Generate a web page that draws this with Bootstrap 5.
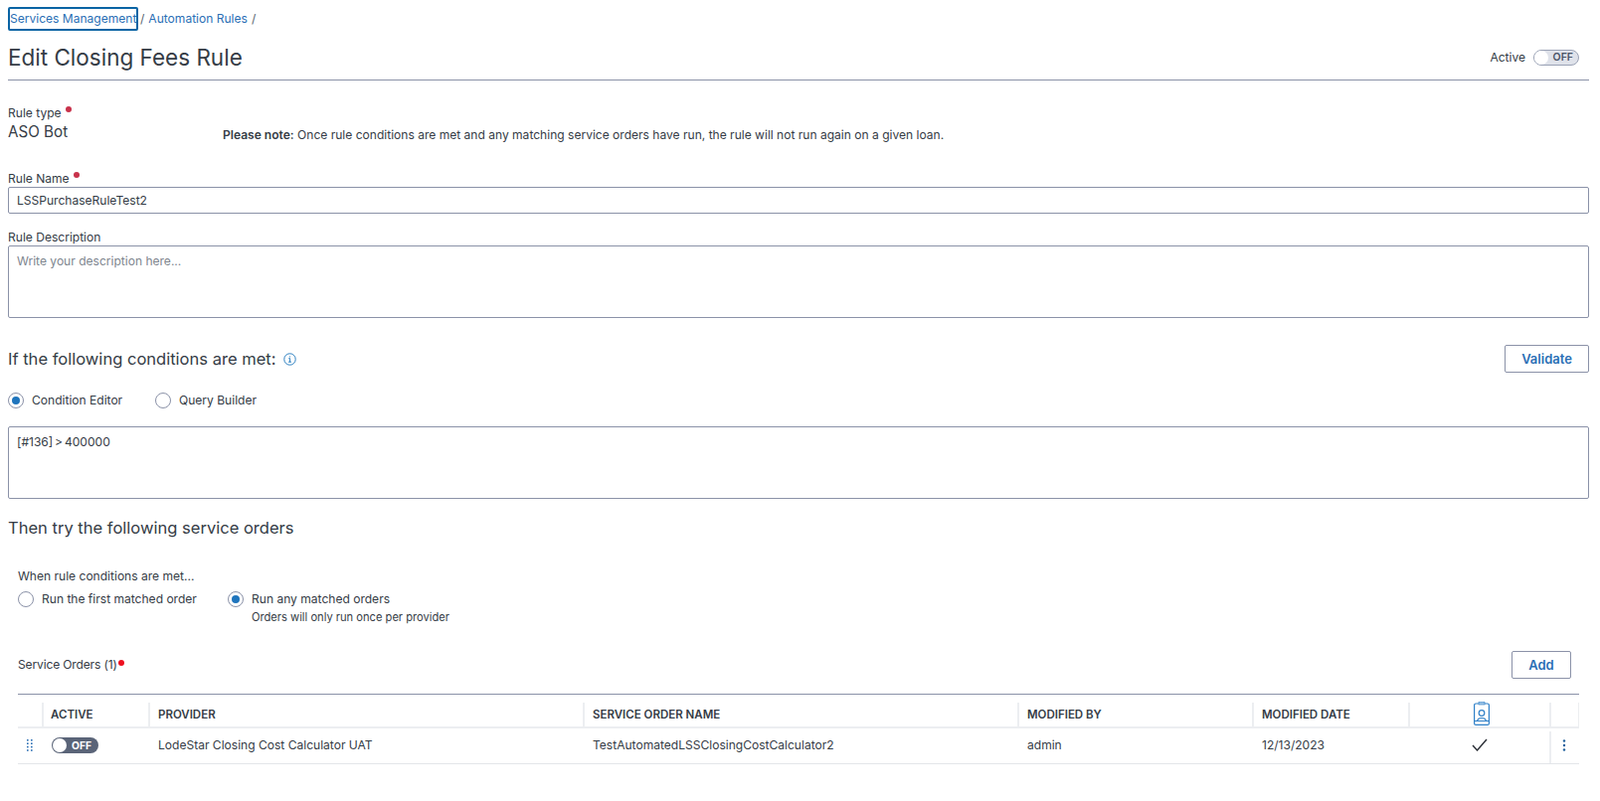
<!DOCTYPE html>
<html lang="en">
<head>
<meta charset="utf-8">
<title>Edit Closing Fees Rule</title>
<link href="https://cdn.jsdelivr.net/npm/bootstrap@5.3.0/dist/css/bootstrap.min.css" rel="stylesheet">
<style>
html,body{height:100%}
body{margin:0;padding:0 11px 0 8px;background:#fff;color:#353c46;font-family:"Inter","Liberation Sans",sans-serif;font-size:12.05px;line-height:20px;overflow:hidden}
a{color:#2b6fb5;text-decoration:none}
.crumbs{display:flex;align-items:center;height:24px;margin-top:7px;gap:4px;color:#555f6d}
.focusbox{border:2px solid #0a64a4;border-radius:2px;height:24px;width:131px;line-height:20px;padding-left:0;margin-right:-2px;white-space:nowrap}
.titlebar{display:flex;justify-content:space-between;align-items:center;height:50px;padding-top:5px;border-bottom:1px solid #8b92a8}
.titlebar h1{font-size:22.5px;font-weight:400;margin:0;line-height:30px;color:#353c46}
.actlabel{margin-right:8px}
.togbox{display:inline-block;position:relative;border-radius:9px}
.togsm{width:46px;height:16px;background:#dfe2ea;border:1px solid #9aa2b5;margin-right:10px}
.togsm::before{content:"";position:absolute;left:0;top:0;width:14px;height:14px;border-radius:50%;background:#fff}
.togsm span{position:absolute;right:5px;top:-2px;font-size:10.5px;font-weight:600;line-height:18px;color:#4a5468}
.toglg{display:block;width:47px;height:16px;background:#5a6478}
.toglg::before{content:"";position:absolute;left:1px;top:1px;width:14px;height:14px;border-radius:50%;background:#fff}
.toglg span{position:absolute;right:7px;top:-1px;font-size:10.3px;font-weight:700;line-height:18px;color:#fff}
.typerow{display:flex;margin-top:25px;height:66px}
.typecol{width:216px}
.typeval{font-size:15.2px;line-height:20px;margin-top:1px}
.fieldlabel{display:block;line-height:16px;margin:0}
.req{display:inline-block;width:6px;height:6px;border-radius:50%;background:#c8324b;margin-left:4px;vertical-align:5px}
.notice{padding-top:20px}
.notice b{font-weight:600}
.inp{display:block;width:100%;border:1px solid #8b92a8;border-radius:2px;padding:0 8px;color:#353c46;background:#fff;font-size:12.05px;line-height:20px}
.inp:focus{outline:0}
.inpsingle{height:27px;margin-bottom:16px}
.inparea{height:73px;margin-top:0;padding-top:5px;resize:none}
.inparea::placeholder{color:#80868f;opacity:1}
.condhead{display:flex;justify-content:space-between;align-items:center;margin-top:27px;height:28px}
.condhead h2,.thenhead{font-size:16.55px;font-weight:400;margin:0;line-height:24px;color:#353c46}
.infoic{margin-left:8px;vertical-align:-1px}
.btnout{border:1px solid #8b92a8;border-radius:2px;background:#fff;color:#2b6fb5;font-weight:600;font-size:13px;padding:0;height:28px;display:inline-flex;align-items:center;justify-content:center}
.btnval{width:85px}
.btnadd{width:60px}
.radiorow{display:flex;align-items:center}
.condradios{margin-top:18px}
.rd{display:inline-block;width:16px;height:16px;border-radius:50%;border:1px solid #8b92a8;background:#fff;position:relative;margin-right:8px;flex:none}
.rd.on::after{content:"";position:absolute;left:3px;top:3px;width:8px;height:8px;border-radius:50%;background:#1f75bd}
.slotcond{width:108px}
.condtext{margin-top:16px;word-spacing:-1.5px}
.thenhead{margin-top:17px;margin-bottom:-1px}
.inner{padding-left:10px}
.whenline{margin-top:28px}
.runrow{display:flex;margin-top:3px}
.runfirst{width:211px}
.runrow .rd{margin-top:2px}
.svcbar{display:flex;justify-content:space-between;align-items:center;height:28px;margin-top:27px;margin-right:18px}
.svclabel{letter-spacing:-.15px}
.reqred{display:inline-block;width:6px;height:6px;border-radius:50%;background:#ee0f1f;vertical-align:3px;margin-left:1px}
.subnote{font-size:11.15px;line-height:14px;margin-top:1px}
table.ordertbl{table-layout:fixed;width:1570px;margin:15px 0 0;border-collapse:separate;border-spacing:0;border-top:1px solid #8b92a8;font-size:12.05px;color:#353c46}
.ordertbl th{height:34px;padding:8px 9px 0;font-size:11.5px;font-weight:600;border-bottom:2px solid #eceef1;position:relative;vertical-align:middle;background:#fff;color:#353c46}
.ordertbl th:nth-child(2){padding-left:8px}
.ordertbl th+th::before{content:"";position:absolute;left:-1px;top:8px;bottom:0;width:2px;background:#eceef1}
.ordertbl th:last-child::after{content:"";position:absolute;right:0;top:8px;bottom:0;width:1px;background:#eceef1}
.ordertbl td{height:36px;padding:0 9px 2px;border-bottom:1px solid #e3e5e9;vertical-align:middle;background:#fff;color:#353c46}
.ordertbl td.ctr,.ordertbl th.ctr{text-align:center}
.ordertbl th.iconhead{padding:0}
.ordertbl td.tight{padding:0 0 2px}
.ordertbl td.sepcell{position:relative}
.ordertbl td.sepcell::before{content:"";position:absolute;left:-1px;top:3px;bottom:0;width:2px;background:#eceef1}
.cw1{width:25px}.cw2{width:107px}.cw3{width:437px}.cw5{width:236px}.cw6{width:157px}.cw7{width:142px}.cw8{width:29px}
.badgeic{display:block;margin:6px auto 0;transform:translateX(2px)}
.midic{display:block;margin:0 auto}
.gripic{transform:translateX(-1px)}
.kebabic{transform:translateX(-1px)}
</style>
</head>
<body>
<nav class="crumbs"><a class="focusbox" href="#">Services Management</a><span>/</span><a href="#">Automation Rules</a><span>/</span></nav>
<div class="titlebar">
  <h1>Edit Closing Fees Rule</h1>
  <div class="d-flex align-items-center"><span class="actlabel">Active</span><span class="togbox togsm"><span>OFF</span></span></div>
</div>
<div class="typerow">
  <div class="typecol"><span class="fieldlabel">Rule type<i class="req"></i></span><div class="typeval">ASO Bot</div></div>
  <div class="notice"><b>Please note:</b> Once rule conditions are met and any matching service orders have run, the rule will not run again on a given loan.</div>
</div>
<label class="fieldlabel" for="rn">Rule Name<i class="req"></i></label>
<input id="rn" class="inp inpsingle" type="text" value="LSSPurchaseRuleTest2">
<label class="fieldlabel" for="rdesc">Rule Description</label>
<textarea id="rdesc" class="inp inparea" placeholder="Write your description here..."></textarea>
<div class="condhead">
  <h2>If the following conditions are met:<svg class="infoic" width="13" height="13" viewBox="0 0 13 13" fill="none" stroke="#2b7fc0"><circle cx="6.5" cy="6.5" r="5.7"/><path d="M5.3 5.6h1.3v3.4M5 9.2h3M6.5 3.4v1"/></svg></h2>
  <button class="btnout btnval" type="button">Validate</button>
</div>
<div class="radiorow condradios">
  <span class="rd on"></span><span class="slotcond">Condition Editor</span>
  <span class="rd ms-3"></span><span>Query Builder</span>
</div>
<textarea class="inp inparea condtext">[#136] &gt; 400000</textarea>
<h2 class="thenhead">Then try the following service orders</h2>
<div class="inner">
  <div class="whenline">When rule conditions are met...</div>
  <div class="runrow">
    <div class="radiorow align-items-start runfirst"><span class="rd"></span><span>Run the first matched order</span></div>
    <div class="radiorow align-items-start"><span class="rd on"></span><div>Run any matched orders<div class="subnote">Orders will only run once per provider</div></div></div>
  </div>
  <div class="svcbar"><span class="svclabel">Service Orders (1)<i class="reqred"></i></span><button class="btnout btnadd" type="button">Add</button></div>
  <table class="table ordertbl">
    <colgroup><col class="cw1"><col class="cw2"><col class="cw3"><col class="cw3"><col class="cw5"><col class="cw6"><col class="cw7"><col class="cw8"></colgroup>
    <thead><tr><th></th><th>ACTIVE</th><th>PROVIDER</th><th>SERVICE ORDER NAME</th><th>MODIFIED BY</th><th>MODIFIED DATE</th>
    <th class="ctr iconhead"><svg class="badgeic" width="16" height="24" viewBox="0 0 16 24" fill="none" stroke="#2f80c8" stroke-width="1.2"><rect x=".6" y="2" width="14.8" height="21.4" rx="1.5"/><rect x="5" y=".6" width="6" height="2.4" fill="#9cc3e6" stroke="#2f80c8" stroke-width=".6"/><circle cx="8" cy="11.5" r="2.8"/><path d="M3.5 19.5c.5-2.200 2.300-3 4.500-3s4 .8 4.500 3M.6 19.500h14.800"/></svg></th><th></th></tr></thead>
    <tbody><tr>
      <td class="ctr tight"><svg class="midic gripic" width="6" height="12" viewBox="0 0 6 12" fill="#2b6fb5"><rect width="1.6" height="1.6"/><rect x="4" width="1.6" height="1.6"/><rect y="3.4" width="1.6" height="1.6"/><rect x="4" y="3.4" width="1.6" height="1.6"/><rect y="6.8" width="1.6" height="1.6"/><rect x="4" y="6.8" width="1.6" height="1.6"/><rect y="10.2" width="1.6" height="1.6"/><rect x="4" y="10.2" width="1.6" height="1.6"/></svg></td>
      <td><span class="togbox toglg"><span>OFF</span></span></td>
      <td>LodeStar Closing Cost Calculator UAT</td>
      <td>TestAutomatedLSSClosingCostCalculator2</td>
      <td>admin</td>
      <td>12/13/2023</td>
      <td class="ctr"><svg class="midic" width="16" height="13" viewBox="0 0 16 13" fill="none" stroke="#2b2f36" stroke-width="1.4"><path d="M1 7l4.500 5L15 1"/></svg></td>
      <td class="ctr tight sepcell"><svg class="midic kebabic" width="4" height="12" viewBox="0 0 4 12" fill="#1f5f9c"><circle cx="2" cy="1.500" r="1.200"/><circle cx="2" cy="6" r="1.200"/><circle cx="2" cy="10.500" r="1.200"/></svg></td>
    </tr></tbody>
  </table>
</div>
<script src="https://cdn.jsdelivr.net/npm/bootstrap@5.3.0/dist/js/bootstrap.bundle.min.js"></script>
</body>
</html>
